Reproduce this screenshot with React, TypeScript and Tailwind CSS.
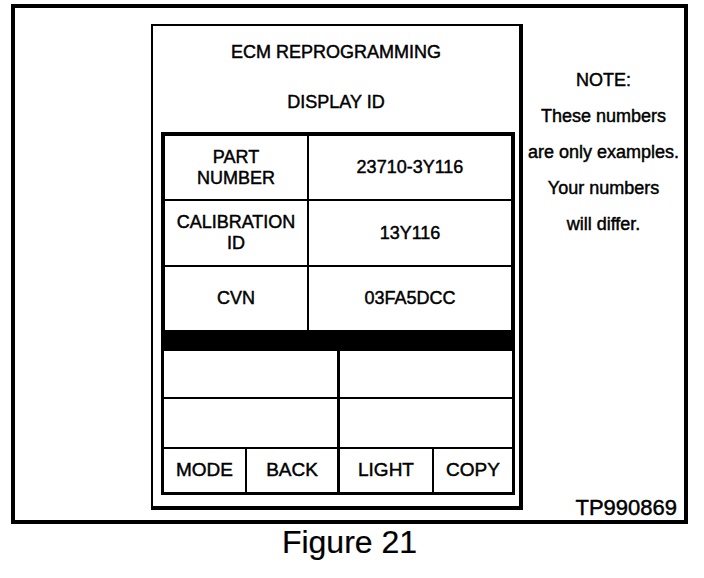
// App.tsx
import React from 'react'

const noteLines = ['NOTE:', 'These numbers', 'are only examples.', 'Your numbers', 'will differ.']

const rows = [
    { label: ['PART', 'NUMBER'], value: '23710-3Y116', h: 'h-[65px] border-b-2' },
    { label: ['CALIBRATION', 'ID'], value: '13Y116', h: 'h-[66px] border-b-2' },
    { label: ['CVN'], value: '03FA5DCC', h: 'h-[63px]' },
]

export default function App() {
    return (
        <div className="min-h-screen bg-white text-black font-['Liberation_Sans',Arial,sans-serif]">
            <div className="pl-[11px] pt-[4px]">
                {/* Outer frame — scanned text looks heavy, so stroke it a touch */}
                <div className="flex h-[520px] w-[677px] border-4 border-black [-webkit-text-stroke:0.45px_black]">
                    {/* Device screen */}
                    <div className="ml-[136px] mt-[16px] flex h-[486px] w-[372px] flex-col border-b-4 border-l-2 border-r-4 border-t-2 border-black">
                        <div className="pt-[14px] text-center text-[18px] leading-[24px]">ECM REPROGRAMMING</div>
                        <div className="mt-[26px] text-center text-[18px] leading-[24px]">DISPLAY ID</div>

                        <div className="ml-[8px] mt-[18px] w-[354px]">
                            {/* Data table */}
                            <div className="border-x-4 border-t-4 border-black">
                                {rows.map((row) => (
                                    <div key={row.value} className={`flex border-black ${row.h}`}>
                                        <div className="flex w-[144px] flex-col items-center justify-center border-r-2 border-black text-[18px] leading-[21px]">
                                            {row.label.map((l) => (
                                                <span key={l}>{l}</span>
                                            ))}
                                        </div>
                                        <div className="flex flex-1 items-center justify-center text-[18px]">{row.value}</div>
                                    </div>
                                ))}
                                <div className="h-[21px] bg-black" />
                            </div>

                            {/* Button grid */}
                            <div className="border-x-[3px] border-b-[3px] border-black">
                                <div className="flex h-[48px] border-b-2 border-black">
                                    <div className="w-[176px] border-r-[3px] border-black" />
                                    <div className="flex-1" />
                                </div>
                                <div className="flex h-[50px] border-b-2 border-black">
                                    <div className="w-[176px] border-r-[3px] border-black" />
                                    <div className="flex-1" />
                                </div>
                                <div className="flex h-[43px] text-[19px]">
                                    <div className="flex w-[83px] items-center justify-center border-r-2 border-black">MODE</div>
                                    <div className="flex w-[93px] items-center justify-center border-r-[3px] border-black">BACK</div>
                                    <div className="flex w-[94px] items-center justify-center border-r-2 border-black">LIGHT</div>
                                    <div className="flex flex-1 items-center justify-center">COPY</div>
                                </div>
                            </div>
                        </div>
                    </div>

                    {/* Note column */}
                    <div className="flex flex-1 flex-col">
                        <div className="pt-[54px] text-center text-[18px] leading-[36px]">
                            {noteLines.map((line) => (
                                <div key={line}>{line}</div>
                            ))}
                        </div>
                        <div className="mt-auto pr-[7px] text-right text-[22px] leading-[25px]">TP990869</div>
                    </div>
                </div>

                <div className="w-[677px] text-center text-[32px] leading-[36px] [-webkit-text-stroke:0.2px_black]">Figure 21</div>
            </div>
        </div>
    )
}
